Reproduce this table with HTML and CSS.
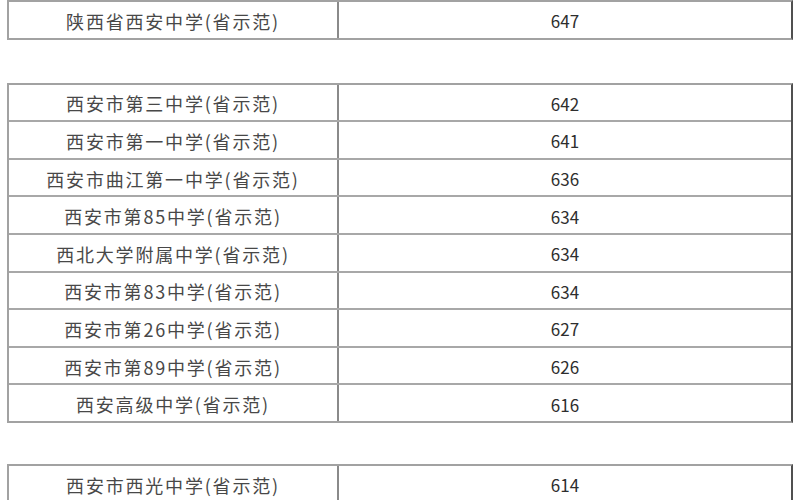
FILE: index.html
```html
<!DOCTYPE html>
<html lang="zh-CN">
<head>
<meta charset="utf-8">
<title>学校分数线</title>
<link rel="stylesheet" href="styles.css">
</head>
<body>
<div class="sheet">
  <div class="tbl t1">
    <div class="row"><div class="name">陕西省西安中学(省示范)</div><div class="score">647</div></div>
  </div>
  <div class="tbl t2">
    <div class="row"><div class="name">西安市第三中学(省示范)</div><div class="score">642</div></div>
    <div class="row"><div class="name">西安市第一中学(省示范)</div><div class="score">641</div></div>
    <div class="row"><div class="name">西安市曲江第一中学(省示范)</div><div class="score">636</div></div>
    <div class="row"><div class="name">西安市第85中学(省示范)</div><div class="score">634</div></div>
    <div class="row"><div class="name">西北大学附属中学(省示范)</div><div class="score">634</div></div>
    <div class="row"><div class="name">西安市第83中学(省示范)</div><div class="score">634</div></div>
    <div class="row"><div class="name">西安市第26中学(省示范)</div><div class="score">627</div></div>
    <div class="row"><div class="name">西安市第89中学(省示范)</div><div class="score">626</div></div>
    <div class="row"><div class="name">西安高级中学(省示范)</div><div class="score">616</div></div>
  </div>
  <div class="tbl t3">
    <div class="row"><div class="name">西安市西光中学(省示范)</div><div class="score">614</div></div>
  </div>
</div>
</body>
</html>
```
FILE: styles.css
```css
html, body {
  margin: 0;
  padding: 0;
  background: #ffffff;
}
body {
  width: 800px;
  height: 500px;
  overflow: hidden;
  font-family: "Noto Sans CJK SC", "Noto Sans", sans-serif;
}
.sheet {
  padding: 0 7px;
}
.tbl {
  width: 782px;
  border: 2px solid #a2a2a2;
  border-right-color: #505050;
}
.t2 {
  margin-top: 43px;
}
.t3 {
  margin-top: 41px;
}
.row {
  display: grid;
  grid-template-columns: 330px 1fr;
  height: 35.6px;
}
.row + .row {
  border-top: 2px solid #a8a8a8;
}
.name,
.score {
  display: flex;
  align-items: center;
  justify-content: center;
  padding-top: 2px;
}
.name {
  border-right: 2px solid #8a8a8a;
  font-size: 18px;
  letter-spacing: 1.8px;
  color: #484848;
}
.score {
  font-size: 17px;
  color: #2e2e2e;
}
```
